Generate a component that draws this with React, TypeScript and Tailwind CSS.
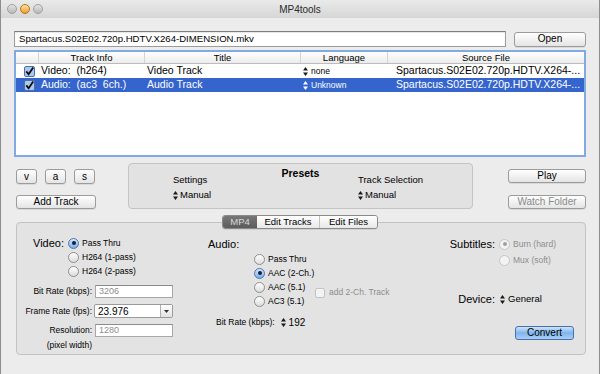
import type { ReactNode } from "react";

const Stepper = ({ color = "#1a1a1a" }: { color?: string }) => (
  <svg width="5" height="9" viewBox="0 0 5 9" className="shrink-0">
    <path d="M2.5 0L5 3.5H0Z M2.5 9L0 5.5H5Z" fill={color} />
  </svg>
);

const Check = () => (
  <svg width="11" height="11" viewBox="0 0 11 11">
    <rect x="0.5" y="0.5" width="10" height="10" rx="1.5" fill="#a9c9f0" stroke="#4d6fa3" />
    <path d="M2.3 5.4L4.6 8.2L9.2 1.6" stroke="#0d0d0d" strokeWidth="1.8" fill="none" />
  </svg>
);

const Button = ({ children, className = "", disabled = false }: { children: ReactNode; className?: string; disabled?: boolean }) => (
  <button
    className={`flex items-center justify-center rounded-[3px] border border-[#9b9b9b] bg-gradient-to-b from-white to-[#e4e4e4] text-[10px] leading-none shadow-[0_1px_0_rgba(0,0,0,0.08)] ${disabled ? "text-[#8a8a8a]" : "text-black"} ${className}`}
  >
    {children}
  </button>
);

const Radio = ({ label, checked = false, disabled = false, className = "" }: { label: string; checked?: boolean; disabled?: boolean; className?: string }) => (
  <div className={`flex h-[14px] items-center gap-[3px] ${className}`}>
    <span
      className={`flex h-[11px] w-[11px] shrink-0 items-center justify-center rounded-full border ${
        disabled
          ? "border-[#c6c6c6] bg-[#f3f3f3]"
          : checked
            ? "border-[#4f74ad] bg-gradient-to-b from-[#d6e8fb] to-[#79aee9]"
            : "border-[#8f8f8f] bg-gradient-to-b from-white to-[#dcdcdc]"
      }`}
    >
      {checked && <span className={`h-[4px] w-[4px] rounded-full ${disabled ? "bg-[#a0a0a0]" : "bg-[#14213a]"}`} />}
    </span>
    <span className={`whitespace-nowrap text-[8.5px] ${disabled ? "text-[#8d8d8d]" : "text-black"}`}>{label}</span>
  </div>
);

const Field = ({ value, grey = false }: { value: string; grey?: boolean }) => (
  <div
    className={`flex h-[13px] w-[78px] items-center border border-[#a8a8a8] border-t-[#8c8c8c] bg-white pl-[3px] text-[9px] ${grey ? "text-[#8d8d8d]" : "text-black"}`}
  >
    {value}
  </div>
);

const rows = [
  { info: "Video:  (h264)", title: "Video Track", lang: "none", src: "Spartacus.S02E02.720p.HDTV.X264-...", sel: false },
  { info: "Audio:  (ac3  6ch.)", title: "Audio Track", lang: "Unknown", src: "Spartacus.S02E02.720p.HDTV.X264-...", sel: true },
];

export default function App() {
  return (
    <div className="flex h-[374px] w-[600px] flex-col overflow-hidden border-x border-[#8e8e8e] bg-[#ececec] font-['Liberation_Sans',Arial,sans-serif] text-black">
      {/* title bar */}
      <div className="grid h-[18px] shrink-0 grid-cols-[1fr_auto_1fr] items-center bg-gradient-to-b from-[#eaeaea] to-[#d6d6d6]">
        <div className="flex gap-[3px] pl-[6px]">
          <span className="h-[10px] w-[10px] rounded-full border border-[#9f9f9f] bg-gradient-to-b from-[#e4e4e4] to-[#b8b8b8]" />
          <span className="h-[10px] w-[10px] rounded-full border border-[#b8741c] bg-gradient-to-b from-[#fde3a0] to-[#f29b1e]" />
          <span className="h-[10px] w-[10px] rounded-full border border-[#9f9f9f] bg-gradient-to-b from-[#e4e4e4] to-[#b8b8b8]" />
        </div>
        <span className="text-[10px] text-[#2a2a2a]">MP4tools</span>
        <span />
      </div>

      <div className="flex flex-col px-[13px]">
        {/* file row */}
        <div className="mt-[13px] flex items-center">
          <div className="flex h-[16px] flex-1 items-center border border-[#9c9c9c] border-t-[#7e7e7e] bg-white pl-[4px] text-[9.6px] shadow-[inset_0_1px_1px_rgba(0,0,0,0.1)]">
            Spartacus.S02E02.720p.HDTV.X264-DIMENSION.mkv
          </div>
          <Button className="ml-[8px] h-[15px] w-[72px]">Open</Button>
        </div>

        {/* track table */}
        <div className="mt-[3px] h-[107px] border-2 border-[#82aae2] bg-white">
          <div className="flex h-[12px] border-b border-[#bcbcbc] bg-gradient-to-b from-white to-[#ececec] text-[9.5px] leading-[12px]">
            <div className="w-[23px] border-r border-[#d4d4d4]" />
            <div className="w-[106px] border-r border-[#d4d4d4] text-center">Track Info</div>
            <div className="w-[156px] border-r border-[#d4d4d4] text-center">Title</div>
            <div className="w-[87px] border-r border-[#d4d4d4] text-center">Language</div>
            <div className="flex-1 text-center">Source File</div>
          </div>
          {rows.map((r) => (
            <div
              key={r.info}
              className={`flex h-[14px] items-center whitespace-pre text-[10.5px] ${r.sel ? "bg-[#3565cc] text-white" : "text-black"}`}
            >
              <div className="flex w-[23px] justify-center pl-[3px]">
                <Check />
              </div>
              <div className="w-[106px] pl-[2px]">{r.info}</div>
              <div className="w-[156px] pl-[2px]">{r.title}</div>
              <div className="flex w-[87px] items-center gap-[3px] pl-[2px] text-[8.5px]">
                <Stepper color={r.sel ? "#ffffff" : "#1a1a1a"} />
                {r.lang}
              </div>
              <div className="flex-1 overflow-hidden pl-[8px]">{r.src}</div>
            </div>
          ))}
        </div>

        {/* controls row */}
        <div className="mt-[6px] flex items-start">
          <div className="ml-[2px] flex w-[80px] flex-col pt-[6px]">
            <div className="flex gap-[8px]">
              <Button className="h-[15px] w-[21px]">v</Button>
              <Button className="h-[15px] w-[21px]">a</Button>
              <Button className="h-[15px] w-[21px]">s</Button>
            </div>
            <Button className="mt-[11px] h-[14px] w-[80px]">Add Track</Button>
          </div>

          <div className="ml-[32px] flex h-[46px] w-[346px] flex-col rounded-[4px] border border-[#c4c4c4] bg-[#e2e2e2]">
            <div className="mt-[3px] text-center text-[10.5px] font-bold leading-[12px]">Presets</div>
            <div className="-mt-[5px] flex text-[9.5px]">
              <div className="ml-[44px] flex w-[140px] flex-col">
                <span className="leading-[12px]">Settings</span>
                <span className="mt-[3px] flex items-center gap-[2px] leading-[12px]">
                  <Stepper />
                  Manual
                </span>
              </div>
              <div className="ml-[45px] flex flex-col">
                <span className="leading-[12px]">Track Selection</span>
                <span className="mt-[3px] flex items-center gap-[2px] leading-[12px]">
                  <Stepper />
                  Manual
                </span>
              </div>
            </div>
          </div>

          <div className="ml-[35px] flex w-[78px] flex-col pt-[6px]">
            <Button className="h-[14px] w-[78px]">Play</Button>
            <Button disabled className="mt-[12px] h-[14px] w-[78px]">
              Watch Folder
            </Button>
          </div>
        </div>

        {/* tabs */}
        <div className="relative z-10 mt-[6px] flex justify-center">
          <div className="flex h-[14px] overflow-hidden rounded-[3px] border border-[#8a8a8a] text-[9.5px] leading-[12px] shadow-[0_1px_0_rgba(0,0,0,0.08)]">
            <div className="w-[34px] bg-gradient-to-b from-[#777] to-[#5c5c5c] text-center text-[#d8d8d8]">MP4</div>
            <div className="w-[63px] border-r border-[#c2c2c2] bg-gradient-to-b from-white to-[#e8e8e8] text-center">Edit Tracks</div>
            <div className="w-[57px] bg-gradient-to-b from-white to-[#e8e8e8] text-center">Edit Files</div>
          </div>
        </div>

        {/* tab content */}
        <div className="-mt-[7px] ml-[2px] flex h-[133px] rounded-[4px] border border-[#c2c2c2] bg-[#e3e3e3]">
          {/* video column */}
          <div className="flex w-[185px] flex-col pt-[13px]">
            <div className="flex pl-[16px]">
              <span className="w-[35px] text-[11px] leading-[14px]">Video:</span>
              <div className="flex flex-col">
                <Radio label="Pass Thru" checked />
                <Radio label="H264 (1-pass)" />
                <Radio label="H264 (2-pass)" />
              </div>
            </div>
            <div className="mt-[7px] grid grid-cols-[75px_78px] items-center gap-x-[3px] gap-y-[6px] text-[8.5px]">
              <span className="text-right">Bit Rate (kbps):</span>
              <Field value="3206" grey />
              <span className="text-right">Frame Rate (fps):</span>
              <div className="-ml-[1px] flex h-[14px] w-[79px] items-stretch rounded-[2px] border border-[#9a9a9a] bg-white">
                <span className="flex flex-1 items-center pl-[3px] text-[10px]">23.976</span>
                <span className="flex w-[12px] items-center justify-center border-l border-[#b0b0b0] bg-gradient-to-b from-white to-[#e2e2e2]">
                  <svg width="5" height="3" viewBox="0 0 5 3">
                    <path d="M0 0H5L2.5 3Z" fill="#333" />
                  </svg>
                </span>
              </div>
              <span className="text-right">Resolution:</span>
              <Field value="1280" grey />
            </div>
            <span className="mt-[2px] w-[75px] text-right text-[8.5px] leading-[12px]">(pixel width)</span>
          </div>

          {/* audio column */}
          <div className="flex w-[240px] flex-col pt-[14px]">
            <span className="pl-[6px] text-[11px] leading-[14px]">Audio:</span>
            <div className="mt-[1px] flex items-end pl-[52px]">
              <div className="flex w-[61px] flex-col">
                <Radio label="Pass Thru" />
                <Radio label="AAC (2-Ch.)" checked />
                <Radio label="AAC (5.1)" />
                <Radio label="AC3 (5.1)" />
              </div>
              <div className="mb-[9px] flex items-center gap-[4px]">
                <span className="h-[10px] w-[10px] rounded-[2px] border border-[#c2c2c2] bg-[#f3f3f3]" />
                <span className="text-[8.5px] text-[#8d8d8d]">add 2-Ch. Track</span>
              </div>
            </div>
            <div className="mt-[7px] flex items-center gap-[6px] pl-[14px]">
              <span className="text-[8.5px]">Bit Rate (kbps):</span>
              <span className="flex items-center gap-[3px] text-[10px]">
                <Stepper />
                192
              </span>
            </div>
          </div>

          {/* subtitles / device column */}
          <div className="flex flex-1 flex-col pt-[14px]">
            <div className="grid grid-cols-[53px_auto] gap-x-[4px]">
              <span className="text-right text-[11px] leading-[14px]">Subtitles:</span>
              <div className="flex flex-col gap-[2px]">
                <Radio label="Burn (hard)" checked disabled />
                <Radio label="Mux (soft)" disabled />
              </div>
            </div>
            <div className="mt-[25px] grid grid-cols-[53px_auto] items-center gap-x-[5px]">
              <span className="text-right text-[11px] leading-[14px]">Device:</span>
              <span className="flex items-center gap-[3px] text-[9.5px]">
                <Stepper />
                General
              </span>
            </div>
            <button className="ml-[73px] mt-[20px] flex h-[14px] w-[59px] items-center justify-center rounded-[3px] border border-[#4a6fae] bg-gradient-to-b from-[#cfe4fa] via-[#7fb4ee] to-[#a8d0f7] text-[10px] leading-none text-black">
              Convert
            </button>
          </div>
        </div>
      </div>
    </div>
  );
}
